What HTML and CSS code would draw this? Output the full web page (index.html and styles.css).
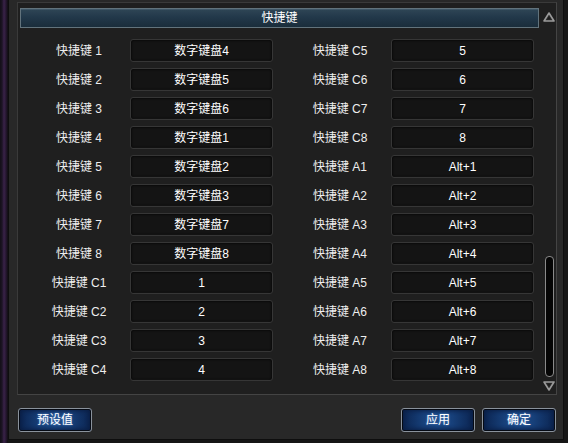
FILE: index.html
```html
<!DOCTYPE html>
<html lang="zh-CN">
<head>
<meta charset="utf-8">
<title>快捷键</title>
<link rel="stylesheet" href="styles.css">
</head>
<body>
<div class="screen">
  <div class="side"></div>
  <div class="frame">
    <div class="panel">
      <div class="main">
        <div class="header">快捷键</div>
        <div class="grid">
          <div class="label">快捷键 1</div><div class="key">数字键盘4</div><div></div><div class="label">快捷键 C5</div><div class="key">5</div>
          <div class="label">快捷键 2</div><div class="key">数字键盘5</div><div></div><div class="label">快捷键 C6</div><div class="key">6</div>
          <div class="label">快捷键 3</div><div class="key">数字键盘6</div><div></div><div class="label">快捷键 C7</div><div class="key">7</div>
          <div class="label">快捷键 4</div><div class="key">数字键盘1</div><div></div><div class="label">快捷键 C8</div><div class="key">8</div>
          <div class="label">快捷键 5</div><div class="key">数字键盘2</div><div></div><div class="label">快捷键 A1</div><div class="key">Alt+1</div>
          <div class="label">快捷键 6</div><div class="key">数字键盘3</div><div></div><div class="label">快捷键 A2</div><div class="key">Alt+2</div>
          <div class="label">快捷键 7</div><div class="key">数字键盘7</div><div></div><div class="label">快捷键 A3</div><div class="key">Alt+3</div>
          <div class="label">快捷键 8</div><div class="key">数字键盘8</div><div></div><div class="label">快捷键 A4</div><div class="key">Alt+4</div>
          <div class="label">快捷键 C1</div><div class="key">1</div><div></div><div class="label">快捷键 A5</div><div class="key">Alt+5</div>
          <div class="label">快捷键 C2</div><div class="key">2</div><div></div><div class="label">快捷键 A6</div><div class="key">Alt+6</div>
          <div class="label">快捷键 C3</div><div class="key">3</div><div></div><div class="label">快捷键 A7</div><div class="key">Alt+7</div>
          <div class="label">快捷键 C4</div><div class="key">4</div><div></div><div class="label">快捷键 A8</div><div class="key">Alt+8</div>
        </div>
      </div>
      <div class="scroll">
        <svg class="arrow" width="12" height="10" viewBox="0 0 12 10"><polygon points="6,1 11,9 1,9" fill="#2c2c2c" stroke="#9a9a9a" stroke-width="1.6" stroke-linejoin="round"/><polygon points="6,4.5 8,7.5 4,7.5" fill="#1a1a1a"/></svg>
        <div class="track"><div class="thumb"></div></div>
        <svg class="arrow" width="12" height="10" viewBox="0 0 12 10"><polygon points="6,9 11,1 1,1" fill="#2c2c2c" stroke="#9a9a9a" stroke-width="1.6" stroke-linejoin="round"/><polygon points="6,5.5 8,2.5 4,2.5" fill="#1a1a1a"/></svg>
      </div>
    </div>
    <div class="footer">
      <button class="btn">预设值</button>
      <div class="spacer"></div>
      <button class="btn">应用</button>
      <button class="btn">确定</button>
    </div>
  </div>
</div>
</body>
</html>
```
FILE: styles.css
```css
html, body {
  margin: 0;
  padding: 0;
  background: #141414;
}
body {
  font-family: "Liberation Sans", "Noto Sans CJK SC", sans-serif;
  font-size: 12px;
  color: #f0f0f0;
}
.screen {
  width: 568px;
  height: 443px;
  display: flex;
  overflow: hidden;
  background: #161616;
}
.side {
  width: 8px;
  height: 443px;
  flex: none;
  background: linear-gradient(90deg, #130f17 0px, #1c1424 2px, #3a2249 4px, #261830 6px, #100d12 8px);
}
.frame {
  width: 556px;
  height: 440px;
  flex: none;
  box-sizing: border-box;
  background: #282828;
  border-left: 1px solid #0e0e0e;
  border-right: 1px solid #0e0e0e;
  border-bottom: 1px solid #0e0e0e;
  padding: 2px 0 0 8px;
  display: flex;
  flex-direction: column;
}
.panel {
  width: 540px;
  height: 393px;
  box-sizing: border-box;
  background: #1f1f1f;
  border: 1px solid #3a3a3a;
  border-right-color: #444;
  border-bottom-color: #444;
  display: flex;
}
.main {
  width: 521px;
  padding: 5px 0 0 2px;
  box-sizing: border-box;
}
.header {
  width: 519px;
  height: 20px;
  box-sizing: border-box;
  border: 1px solid #62737c;
  background: linear-gradient(180deg, #2f4656 0%, #22384a 45%, #1a2d3b 100%);
  box-shadow: inset 0 1px 0 #3e5666;
  text-align: center;
  line-height: 19px;
  color: #ffffff;
}
.grid {
  margin: 11px 0 0 8px;
  display: grid;
  grid-template-columns: 102px 143px 16px 102px 143px;
  grid-auto-rows: 23px;
  row-gap: 6px;
}
.label {
  text-align: center;
  line-height: 25px;
  color: #eeeeee;
}
.key {
  box-sizing: border-box;
  border: 1px solid #363636;
  border-radius: 3px;
  background: #141414;
  box-shadow: inset 0 0 3px #000, inset 0 -1px 0 #1c1c1c;
  text-align: center;
  line-height: 23px;
  overflow: hidden;
  color: #ffffff;
}
.scroll {
  width: 17px;
  display: flex;
  flex-direction: column;
  align-items: center;
  padding: 9px 0 3px 3px;
  box-sizing: border-box;
}
.arrow {
  display: block;
  flex: none;
}
.track {
  flex: 1;
  display: flex;
  flex-direction: column;
  justify-content: flex-end;
  padding-bottom: 4px;
}
.thumb {
  width: 9px;
  height: 121px;
  box-sizing: border-box;
  border: 1px solid #8a8a8a;
  border-radius: 4px;
  background: #050505;
}
.footer {
  display: flex;
  padding: 13px 7px 0 1px;
  gap: 7px;
}
.spacer {
  flex: 1;
}
.btn {
  width: 74px;
  height: 24px;
  box-sizing: border-box;
  padding: 0;
  font-family: "Liberation Sans", "Noto Sans CJK SC", sans-serif;
  font-size: 12px;
  color: #ffffff;
  border: 1px solid #8a929c;
  border-radius: 3px;
  background: linear-gradient(90deg, #0b2450 0%, #17407a 30%, #1a4887 50%, #17407a 70%, #0b2450 100%);
  box-shadow: inset 0 0 0 1px #050a14, inset 0 0 4px 2px #0a1e44;
  text-shadow: 0 0 2px #6a9ad8;
  line-height: 23px;
}
```
